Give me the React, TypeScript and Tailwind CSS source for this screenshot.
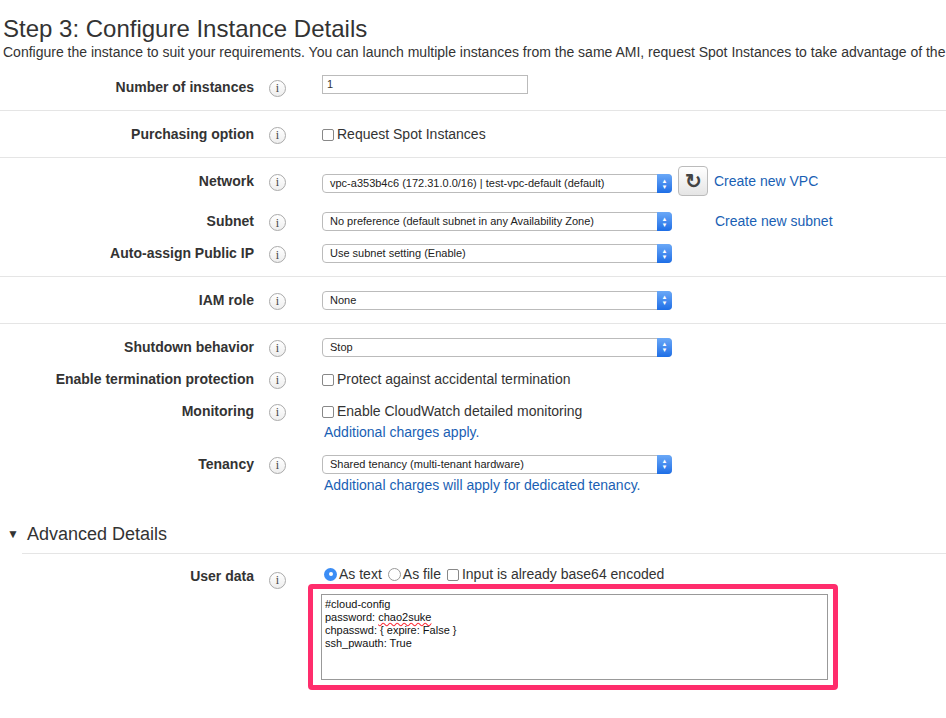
import React from "react";

const Info = () => (
  <span className="inline-flex w-[17px] h-[17px] rounded-full border border-[#aaa] items-center justify-center text-[12px] text-[#444] leading-none bg-gradient-to-b from-white to-[#eee]" style={{ fontFamily: "Georgia, 'Liberation Serif', serif" }}>i</span>
);

const Label = ({ t }: { t: string }) => (
  <div className="w-[322px] flex items-center shrink-0">
    <div className="w-[254px] text-right font-bold text-[14px] text-[#333]">{t}</div>
    <div className="ml-[15px]"><Info /></div>
  </div>
);

const Select = ({ v }: { v: string }) => (
  <div className="w-[350px] h-[19px] border border-[#bbb] rounded-[4px] bg-white flex items-center text-[11px] text-[#222] relative pl-[7px]">
    <span>{v}</span>
    <span className="absolute right-[-1px] top-[-1px] w-[15px] h-[19px] rounded-r-[4px] bg-gradient-to-b from-[#6aa8f7] to-[#1d6ee6] flex flex-col items-center justify-center text-white text-[6px] leading-[6px]">
      <span>▲</span><span>▼</span>
    </span>
  </div>
);

const Cb = () => <span className="inline-block w-[12px] h-[12px] border border-[#888] rounded-[2px] bg-white mr-[3px] mt-[1px]" />;

export default function App() {
  return (
    <div className="w-[946px] h-[718px] overflow-hidden bg-white text-[#333]" style={{ fontFamily: "'Liberation Sans', Arial, sans-serif" }}>
      <div className="pl-[3px] pt-[14px] text-[24px] leading-[30px] text-[#333]">Step 3: Configure Instance Details</div>
      <div className="pl-[3px] text-[14px] leading-[16px] whitespace-nowrap overflow-hidden">Configure the instance to suit your requirements. You can launch multiple instances from the same AMI, request Spot Instances to take advantage of the</div>
      <div className="ml-[22px] mt-[7px]">
        <div className="-ml-[22px] h-[44px] flex items-start pt-[8px] border-b border-[#e5e5e5]">
          <Label t="Number of instances" />
          <div className="w-[206px] h-[19px] border border-[#bbb] text-[11px] pl-[4px] flex items-center">1</div>
        </div>
        <div className="-ml-[22px] h-[47px] flex items-center border-b border-[#e5e5e5]">
          <Label t="Purchasing option" />
          <div className="flex items-center text-[14px]"><Cb />Request Spot Instances</div>
        </div>
        <div className="-ml-[22px] pt-[8px] h-[119px] border-b border-[#e5e5e5]">
          <div className="flex items-center h-[30px]">
            <Label t="Network" />
            <div className="mt-[5px]"><Select v="vpc-a353b4c6 (172.31.0.0/16) | test-vpc-default (default)" /></div>
            <div className="ml-[6px] w-[30px] h-[30px] border border-[#bbb] rounded-[4px] bg-gradient-to-b from-white to-[#e5e5e5] flex items-center justify-center text-[20px] font-bold text-[#444]">↻</div>
            <span className="ml-[6px] text-[14px] text-[#1a5fb4]">Create new VPC</span>
          </div>
          <div className="flex items-center h-[23px] mt-[14px]">
            <Label t="Subnet" />
            <Select v="No preference (default subnet in any Availability Zone)" />
            <span className="ml-[43px] text-[14px] text-[#1a5fb4]">Create new subnet</span>
          </div>
          <div className="flex items-center h-[23px] mt-[9px]">
            <Label t="Auto-assign Public IP" />
            <Select v="Use subnet setting (Enable)" />
          </div>
        </div>
        <div className="-ml-[22px] h-[47px] flex items-center border-b border-[#e5e5e5]">
          <Label t="IAM role" />
          <Select v="None" />
        </div>
        <div className="-ml-[22px] pt-[12px] h-[200px]">
          <div className="flex items-center h-[22px]"><Label t="Shutdown behavior" /><Select v="Stop" /></div>
          <div className="flex items-center h-[22px] mt-[10px]"><Label t="Enable termination protection" /><div className="flex items-center text-[14px]"><Cb />Protect against accidental termination</div></div>
          <div className="flex items-center h-[22px] mt-[10px]"><Label t="Monitoring" /><div className="flex items-center text-[14px]"><Cb />Enable CloudWatch detailed monitoring</div></div>
          <div className="pl-[324px] text-[14px] text-[#1a5fb4] leading-[20px]">Additional charges apply.</div>
          <div className="flex items-center h-[22px] mt-[11px]"><Label t="Tenancy" /><Select v="Shared tenancy (multi-tenant hardware)" /></div>
          <div className="pl-[324px] text-[14px] text-[#1a5fb4] leading-[20px]">Additional charges will apply for dedicated tenancy.</div>
        </div>
      </div>
      <div className="flex items-center pl-[7px] h-[24px] mt-[-2px] text-[18px] text-[#333]">
        <span className="text-[12px] mr-[8px]">▼</span>Advanced Details
      </div>
      <div className="ml-[22px] border-t border-[#e5e5e5] mt-[7px]" />
      <div className="flex mt-[12px]">
        <div className="w-[322px] flex items-start shrink-0">
          <div className="w-[254px] text-right font-bold text-[14px]">User data</div>
          <div className="ml-[15px] mt-[1px]"><Info /></div>
        </div>
        <div>
          <div className="flex items-center text-[14px] h-[16px] ml-[2px]">
            <span className="w-[13px] h-[13px] rounded-full bg-[#3b8df5] flex items-center justify-center mr-[2px]"><span className="w-[4px] h-[4px] rounded-full bg-white" /></span>As text
            <span className="w-[13px] h-[13px] rounded-full border border-[#999] ml-[6px] mr-[2px]" />As file
            <span className="ml-[6px] flex items-center"><Cb /></span>Input is already base64 encoded
          </div>
          <div className="ml-[-14px] mt-[2px] w-[530px] h-[106px] border-[5px] border-[#ff2d6c] rounded-[4px] pt-[5px] pl-[8px]">
            <div className="w-[507px] h-[86px] border border-[#999] px-[3px] pt-[3px] text-[11px] leading-[13px] text-[#111]">
              <div>#cloud-config</div>
              <div>password: <span className="underline decoration-wavy decoration-red-500">chao2suke</span></div>
              <div>chpasswd: {"{"} expire: False {"}"}</div>
              <div>ssh_pwauth: True</div>
            </div>
          </div>
        </div>
      </div>
    </div>
  );
}
